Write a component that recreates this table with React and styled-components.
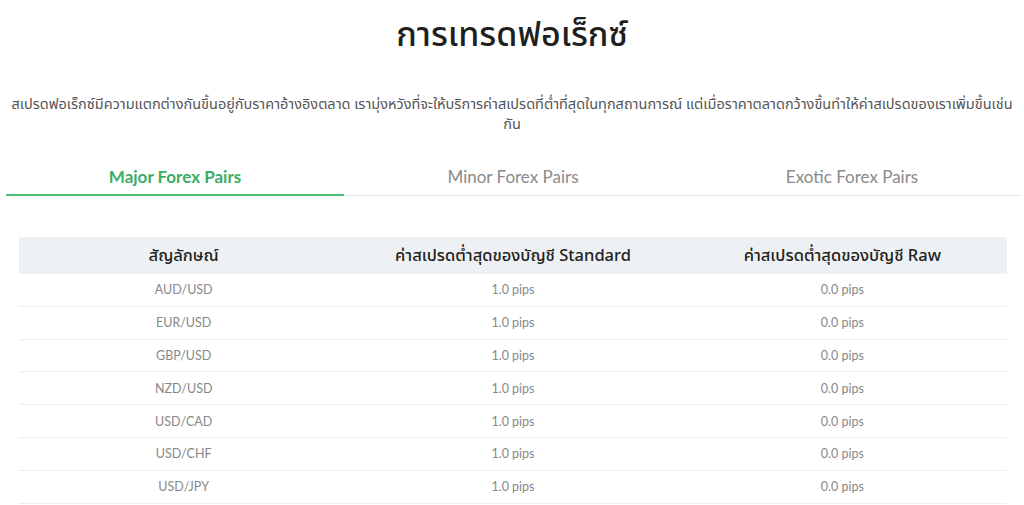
import React, { useState } from "react";
import styled, { createGlobalStyle } from "styled-components";

const Global = createGlobalStyle`
  html, body { margin: 0; padding: 0; background: #fff; }
  body { font-family: "Noto Sans", "Noto Sans Thai", sans-serif; }
`;

const Page = styled.div`
  width: 1024px;
  display: flex;
  flex-direction: column;
  align-items: center;
`;

const Title = styled.h1`
  margin: 11px 0 0;
  font-size: 34px;
  line-height: 44px;
  font-weight: 500;
  color: #1f1f1f;
  text-align: center;
`;

const Lead = styled.p`
  margin: 38px 0 0;
  width: 1004px;
  font-size: 14.5px;
  line-height: 20px;
  color: #555;
  text-align: center;
`;

const Tabs = styled.div`
  margin-top: 26px;
  width: 1016px;
  margin-left: 6px;
  align-self: flex-start;
  display: grid;
  grid-template-columns: 338px 338px 1fr;
  border-bottom: 1px solid #e8e8e8;
`;

const Tab = styled.button`
  background: none;
  border: none;
  padding: 0;
  height: 37px;
  margin-bottom: -1px;
  font-family: "Lato", sans-serif;
  font-size: 17px;
  font-weight: ${(p) => (p.$active ? 700 : 400)};
  color: ${(p) => (p.$active ? "#3aae66" : "#8a8a8a")};
  border-bottom: 2px solid ${(p) => (p.$active ? "#4cbf7a" : "transparent")};
  cursor: pointer;
`;

const Table = styled.table`
  margin-top: 41px;
  width: 988px;
  margin-left: 19px;
  align-self: flex-start;
  border-collapse: collapse;
  table-layout: fixed;
`;

const Th = styled.th`
  background: #eef1f3;
  height: 37px;
  padding: 0;
  font-size: 16.5px;
  font-weight: 500;
  color: #222;
  text-align: center;
`;

const Tr = styled.tr`
  border-bottom: 1px solid #eeeeee;
`;

const Td = styled.td`
  height: 31.8px;
  padding: 0;
  text-align: center;
  font-family: "Lato", sans-serif;
  font-size: 12.5px;
  font-weight: 400;
  color: #888;
`;

const pairs = ["AUD/USD", "EUR/USD", "GBP/USD", "NZD/USD", "USD/CAD", "USD/CHF", "USD/JPY"];

export default function App() {
  const [tab, setTab] = useState(0);
  const tabs = ["Major Forex Pairs", "Minor Forex Pairs", "Exotic Forex Pairs"];
  return (
    <Page>
      <Global />
      <Title>การเทรดฟอเร็กซ์</Title>
      <Lead>
        สเปรดฟอเร็กซ์มีความแตกต่างกันขึ้นอยู่กับราคาอ้างอิงตลาด เรามุ่งหวังที่จะให้บริการค่าสเปรดที่ต่ำที่สุดในทุกสถานการณ์ แต่เมื่อราคาตลาดกว้างขึ้นทำให้ค่าสเปรดของเราเพิ่มขึ้นเช่นกัน
      </Lead>
      <Tabs>
        {tabs.map((t, i) => (
          <Tab key={t} $active={tab === i} onClick={() => setTab(i)}>
            {t}
          </Tab>
        ))}
      </Tabs>
      <Table>
        <thead>
          <tr>
            <Th>สัญลักษณ์</Th>
            <Th>ค่าสเปรดต่ำสุดของบัญชี Standard</Th>
            <Th>ค่าสเปรดต่ำสุดของบัญชี Raw</Th>
          </tr>
        </thead>
        <tbody>
          {pairs.map((p) => (
            <Tr key={p}>
              <Td>{p}</Td>
              <Td>1.0 pips</Td>
              <Td>0.0 pips</Td>
            </Tr>
          ))}
        </tbody>
      </Table>
    </Page>
  );
}
